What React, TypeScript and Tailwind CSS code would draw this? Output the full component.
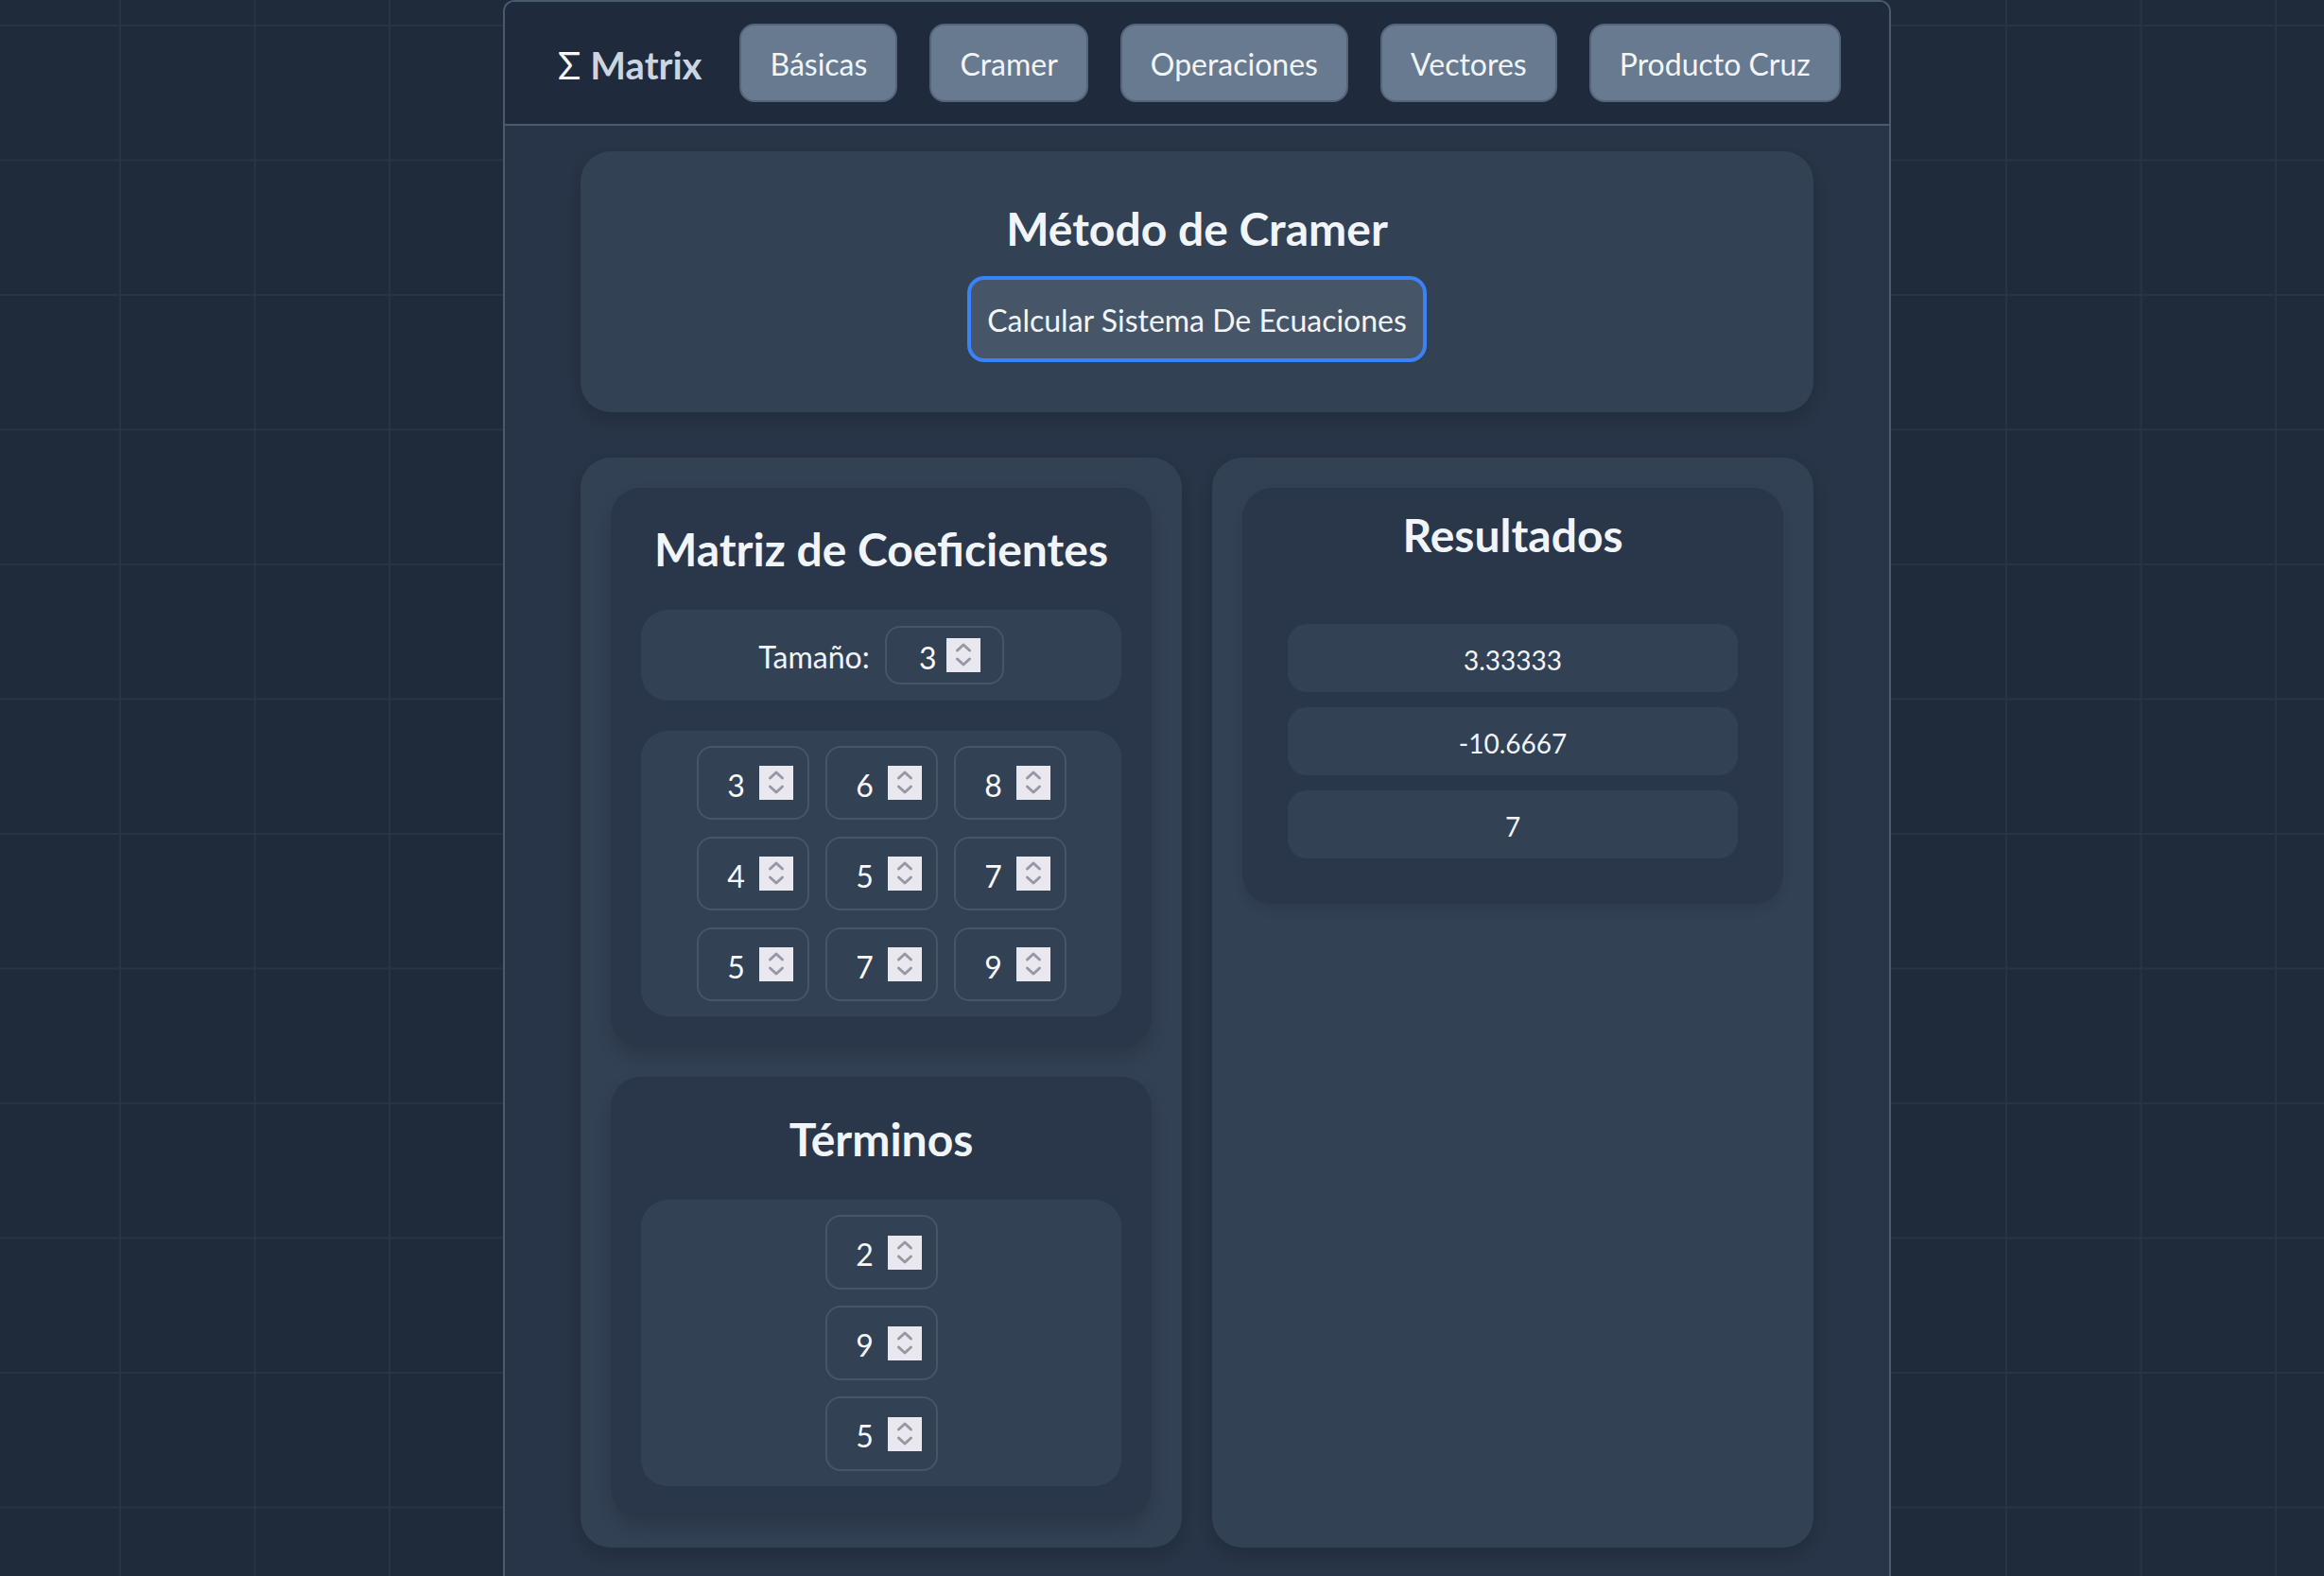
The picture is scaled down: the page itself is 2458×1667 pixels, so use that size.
import React from 'react';

const navItems = ['Básicas', 'Cramer', 'Operaciones', 'Vectores', 'Producto Cruz'];
const matrix = [
  [3, 6, 8],
  [4, 5, 7],
  [5, 7, 9],
];
const terms = [2, 9, 5];
const results = ['3.33333', '-10.6667', '7'];

function Spinner() {
  return (
    <span className="flex h-[36px] w-[36px] shrink-0 bg-[#e9e8ee]">
      <svg
        viewBox="0 0 36 36"
        className="h-full w-full"
        fill="none"
        stroke="#9a97a4"
        strokeWidth="3"
        strokeLinecap="round"
        strokeLinejoin="round"
      >
        <path d="M11.5 13 L18 7 L24.5 13" />
        <path d="M11.5 22 L18 28 L24.5 22" />
      </svg>
    </span>
  );
}

type CellProps = {
  value: number;
  className: string;
};

function NumberCell({ value, className }: CellProps) {
  return (
    <div className={`flex items-center rounded-[16px] border-2 border-[#475569] ${className}`}>
      <input
        type="text"
        inputMode="numeric"
        defaultValue={value}
        className="w-full min-w-0 bg-transparent pt-[5px] text-center text-[32px] text-[#f8fafc] outline-none"
      />
      <Spinner />
    </div>
  );
}

export default function App() {
  return (
    <div className="min-h-screen w-full bg-[#1f2a3b] bg-[linear-gradient(to_right,#283445_2px,transparent_2px),linear-gradient(to_bottom,#283445_2px,transparent_2px)] bg-[size:142.5px_142.5px] bg-[position:126px_26px] font-[family-name:Lato,'Noto_Sans',sans-serif]">
      <div className="ml-[532px] flex min-h-screen w-[1468px] flex-col overflow-hidden rounded-t-[12px] border-x-2 border-t-2 border-[#4b5a6f]">
        {/* header */}
        <header className="flex h-[131px] shrink-0 items-center gap-[34px] border-b-2 border-[#4b5a6f] bg-[#1f2a3c] pl-[56px]">
          <div className="mr-[6px] flex items-baseline gap-[10px] pt-[4px] text-[40px] leading-none">
            <span className="font-normal text-[#f8fafc]">Σ</span>
            <span className="font-bold text-[#cbd5e1]">Matrix</span>
          </div>
          {navItems.map((item) => (
            <button
              key={item}
              className="h-[83px] rounded-[16px] border-2 border-[#55647a] bg-[#677a8f] px-[30px] pt-[3px] text-[32px] text-[#f1f5f9]"
            >
              {item}
            </button>
          ))}
        </header>

        {/* content */}
        <main className="flex-1 bg-[#283447] px-[80px] pt-[27px] pb-[40px]">
          <section className="flex flex-col items-center rounded-[32px] bg-[#334155] pt-[50px] pb-[53px] shadow-[0_8px_16px_rgba(0,0,0,0.14)]">
            <h1 className="text-[48px] leading-[64px] font-bold text-[#f1f5f9]">Método de Cramer</h1>
            <button className="mt-[18px] h-[91px] rounded-[18px] border-4 border-[#3b82f6] bg-[#475569] px-[17px] pt-[3px] text-[32px] text-[#f1f5f9]">
              Calcular Sistema De Ecuaciones
            </button>
          </section>

          <div className="mt-[48px] grid grid-cols-2 gap-[32px]">
            {/* left column */}
            <div className="flex flex-col gap-[32px] rounded-[32px] bg-[#334155] p-[32px] shadow-[0_8px_16px_rgba(0,0,0,0.14)]">
              <div className="rounded-[32px] bg-[#2a3649] px-[32px] pt-[33px] pb-[32px] shadow-[0_10px_18px_rgba(0,0,0,0.16)]">
                <h2 className="text-center text-[48px] leading-[64px] font-bold text-[#f1f5f9]">Matriz de Coeficientes</h2>
                <div className="mt-[32px] flex h-[96px] items-center justify-center gap-[16px] rounded-[28px] bg-[#334155]">
                  <label className="pt-[3px] text-[32px] text-[#f1f5f9]">Tamaño:</label>
                  <NumberCell value={3} className="h-[62px] w-[126px] pl-[24px] pr-[23px]" />
                </div>
                <div className="mt-[32px] grid grid-cols-[repeat(3,119px)] justify-center gap-x-[17px] gap-y-[18px] rounded-[28px] bg-[#334155] p-[16px]">
                  {matrix.flat().map((v, i) => (
                    <NumberCell key={i} value={v} className="h-[78px] w-[119px] pl-[16px] pr-[15px]" />
                  ))}
                </div>
              </div>

              <div className="rounded-[32px] bg-[#2a3649] px-[32px] pt-[34px] pb-[33px] shadow-[0_10px_18px_rgba(0,0,0,0.16)]">
                <h2 className="text-center text-[48px] leading-[64px] font-bold text-[#f1f5f9]">Términos</h2>
                <div className="mt-[32px] flex flex-col items-center gap-[17px] rounded-[28px] bg-[#334155] py-[16px]">
                  {terms.map((v, i) => (
                    <NumberCell key={i} value={v} className="h-[79px] w-[119px] pl-[16px] pr-[15px]" />
                  ))}
                </div>
              </div>
            </div>

            {/* right column */}
            <div className="rounded-[32px] bg-[#334155] p-[32px] shadow-[0_8px_16px_rgba(0,0,0,0.14)]">
              <div className="rounded-[32px] bg-[#2a3649] px-[32px] pt-[18px] pb-[48px] shadow-[0_6px_12px_rgba(0,0,0,0.10)]">
                <h2 className="text-center text-[48px] leading-[64px] font-bold text-[#f1f5f9]">Resultados</h2>
                <ul className="mt-[62px] flex flex-col gap-[16px] px-[16px]">
                  {results.map((r) => (
                    <li
                      key={r}
                      className="flex h-[72px] items-center justify-center rounded-[20px] bg-[#334155] pt-[4px] text-[28px] text-[#f1f5f9]"
                    >
                      {r}
                    </li>
                  ))}
                </ul>
              </div>
            </div>
          </div>
        </main>
      </div>
    </div>
  );
}
